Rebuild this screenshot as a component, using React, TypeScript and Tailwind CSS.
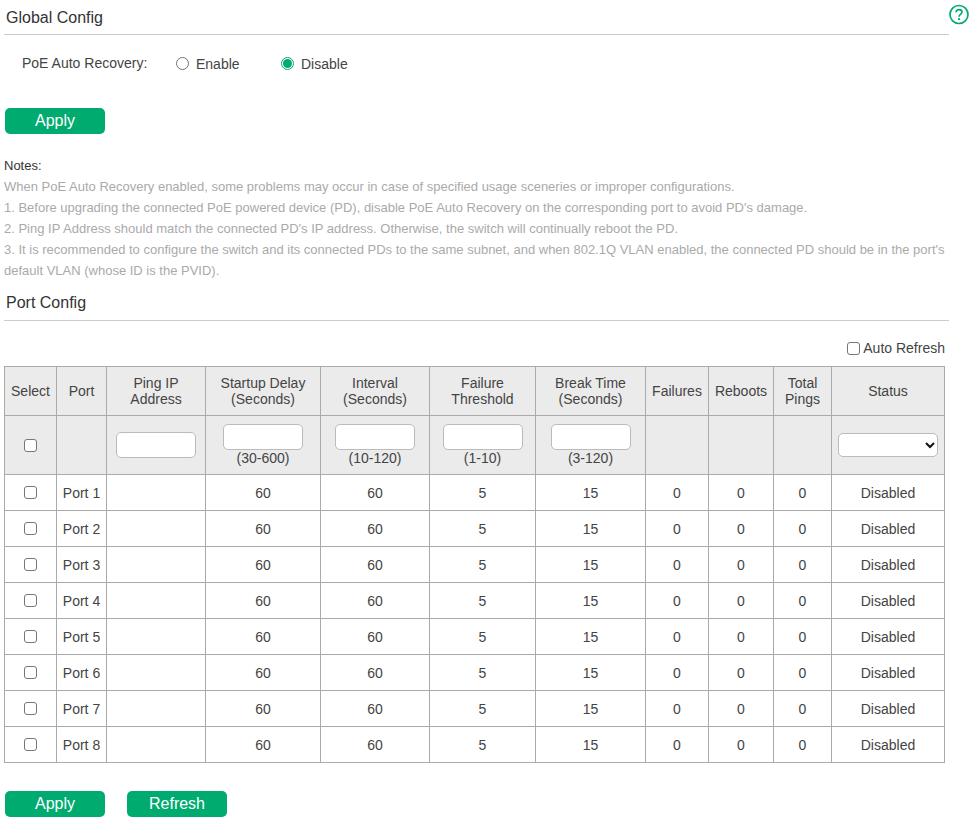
const PORTS = [1, 2, 3, 4, 5, 6, 7, 8];
const COL_WIDTHS = [52, 50, 99, 115, 109, 106, 110, 63, 65, 58, 113];

const TH = 'border border-[#aaa] bg-[#ebebeb] font-normal text-center leading-4 p-0';
const TD = 'border border-[#aaa] text-center p-0 pt-[1px]';
const BOX = 'appearance-none block w-[13px] h-[13px] rounded-[3px] border border-[#767676] bg-white';

function GreenButton({ label }: { label: string }) {
  return (
    <button
      type="button"
      className="w-[100px] h-[26px] rounded-[5px] bg-[#00ab70] text-white text-base leading-[24px] text-center"
    >
      {label}
    </button>
  );
}

function HelpIcon() {
  return (
    <svg width="22" height="22" viewBox="0 0 22 22" fill="none" className="absolute left-[948px] top-[4px]">
      <circle cx="11" cy="10.5" r="9" stroke="#00ab70" strokeWidth="1.7" />
      <path d="M8 8.3c0-1.7 1.3-2.7 3-2.7s3 1 3 2.5c0 2.3-3 2.3-3 4.6" stroke="#00ab70" strokeWidth="1.7" />
      <circle cx="11" cy="15.2" r="1.1" fill="#00ab70" />
    </svg>
  );
}

function SectionTitle({ label, className }: { label: string; className: string }) {
  return (
    <div className={`ml-[4px] w-[945px] border-b border-[#ccc] pl-[2px] text-base leading-4 text-[#333] ${className}`}>
      {label}
    </div>
  );
}

function RangeInput({ hint }: { hint?: string }) {
  return (
    <div className="flex flex-col items-center">
      <input type="text" className="w-[80px] h-[26px] rounded-[5px] border border-[#bbb] bg-white" />
      {hint && <div className="leading-4">{hint}</div>}
    </div>
  );
}

function Radio({ label, checked }: { label: string; checked?: boolean }) {
  return (
    <div className="flex items-center">
      {checked ? (
        <span className="w-[13px] h-[13px] rounded-full border border-[#00ab70] flex items-center justify-center">
          <span className="w-[9px] h-[9px] rounded-full bg-[#00ab70]" />
        </span>
      ) : (
        <span className="w-[13px] h-[13px] rounded-full border border-[#767676] bg-white" />
      )}
      <span className="ml-[7px] relative top-[1px]">{label}</span>
    </div>
  );
}

export default function App() {
  return (
    <div className="relative w-[973px] h-[819px] overflow-hidden bg-white pt-[10px] text-[14px] text-[#444] font-['Liberation_Sans',Arial,sans-serif]">
      <HelpIcon />
      <SectionTitle label="Global Config" className="h-[25px]" />

      <div className="flex items-center h-[20px] mt-[18px] ml-[22px]">
        <span className="w-[154px]">PoE Auto Recovery:</span>
        <div className="w-[105px]">
          <Radio label="Enable" />
        </div>
        <Radio label="Disable" checked />
      </div>

      <div className="ml-[5px] mt-[35px]">
        <GreenButton label="Apply" />
      </div>

      <div className="ml-[4px] mt-[22px] w-[945px] text-[13px] leading-[21px] text-[#aaa]">
        <div className="leading-[20px] text-[#333]">Notes:</div>
        <div>
          When PoE Auto Recovery enabled, some problems may occur in case of specified usage sceneries or improper
          configurations.
        </div>
        <div>
          1. Before upgrading the connected PoE powered device (PD), disable PoE Auto Recovery on the corresponding
          port to avoid PD's damage.
        </div>
        <div>
          2. Ping IP Address should match the connected PD's IP address. Otherwise, the switch will continually reboot
          the PD.
        </div>
        <div>
          3. It is recommended to configure the switch and its connected PDs to the same subnet, and when 802.1Q VLAN
          enabled, the connected PD should be in the port's default VLAN (whose ID is the PVID).
        </div>
      </div>

      <div className="mt-[14px]">
        <SectionTitle label="Port Config" className="h-[26px]" />
      </div>

      <div className="flex justify-end items-center w-[945px] h-[16px] mt-[19px]">
        <input type="checkbox" className={BOX} />
        <span className="ml-[3px]">Auto Refresh</span>
      </div>

      <table className="ml-[4px] mt-[10px] w-[941px] table-fixed border-collapse">
        <colgroup>
          {COL_WIDTHS.map((w, i) => (
            <col key={i} style={{ width: w }} />
          ))}
        </colgroup>
        <thead>
          <tr className="h-[49px]">
            <th className={TH}>Select</th>
            <th className={TH}>Port</th>
            <th className={TH}>
              Ping IP
              <br />
              Address
            </th>
            <th className={TH}>
              Startup Delay
              <br />
              (Seconds)
            </th>
            <th className={TH}>
              Interval
              <br />
              (Seconds)
            </th>
            <th className={TH}>
              Failure
              <br />
              Threshold
            </th>
            <th className={TH}>
              Break Time
              <br />
              (Seconds)
            </th>
            <th className={TH}>Failures</th>
            <th className={TH}>Reboots</th>
            <th className={TH}>
              Total
              <br />
              Pings
            </th>
            <th className={TH}>Status</th>
          </tr>
          <tr className="h-[59px]">
            <td className={TH}>
              <input type="checkbox" className={`${BOX} mx-auto`} />
            </td>
            <td className={TH} />
            <td className={TH}>
              <RangeInput />
            </td>
            <td className={TH}>
              <RangeInput hint="(30-600)" />
            </td>
            <td className={TH}>
              <RangeInput hint="(10-120)" />
            </td>
            <td className={TH}>
              <RangeInput hint="(1-10)" />
            </td>
            <td className={TH}>
              <RangeInput hint="(3-120)" />
            </td>
            <td className={TH} />
            <td className={TH} />
            <td className={TH} />
            <td className={TH}>
              <div className="relative mx-auto w-[100px] h-[24px] rounded-[5px] border border-[#bbb] bg-white">
                <svg width="10" height="7" viewBox="0 0 10 7" fill="none" className="absolute right-[2px] top-[8px]">
                  <path d="M1 1l4 4 4-4" stroke="#111" strokeWidth="2" />
                </svg>
              </div>
            </td>
          </tr>
        </thead>
        <tbody>
          {PORTS.map((n) => (
            <tr key={n} className="h-[36px]">
              <td className={TD}>
                <input type="checkbox" className={`${BOX} mx-auto relative top-[-1px]`} />
              </td>
              <td className={TD}>Port {n}</td>
              <td className={TD} />
              <td className={TD}>60</td>
              <td className={TD}>60</td>
              <td className={TD}>5</td>
              <td className={TD}>15</td>
              <td className={TD}>0</td>
              <td className={TD}>0</td>
              <td className={TD}>0</td>
              <td className={TD}>Disabled</td>
            </tr>
          ))}
        </tbody>
      </table>

      <div className="flex gap-[22px] ml-[5px] mt-[28px]">
        <GreenButton label="Apply" />
        <GreenButton label="Refresh" />
      </div>
    </div>
  );
}
